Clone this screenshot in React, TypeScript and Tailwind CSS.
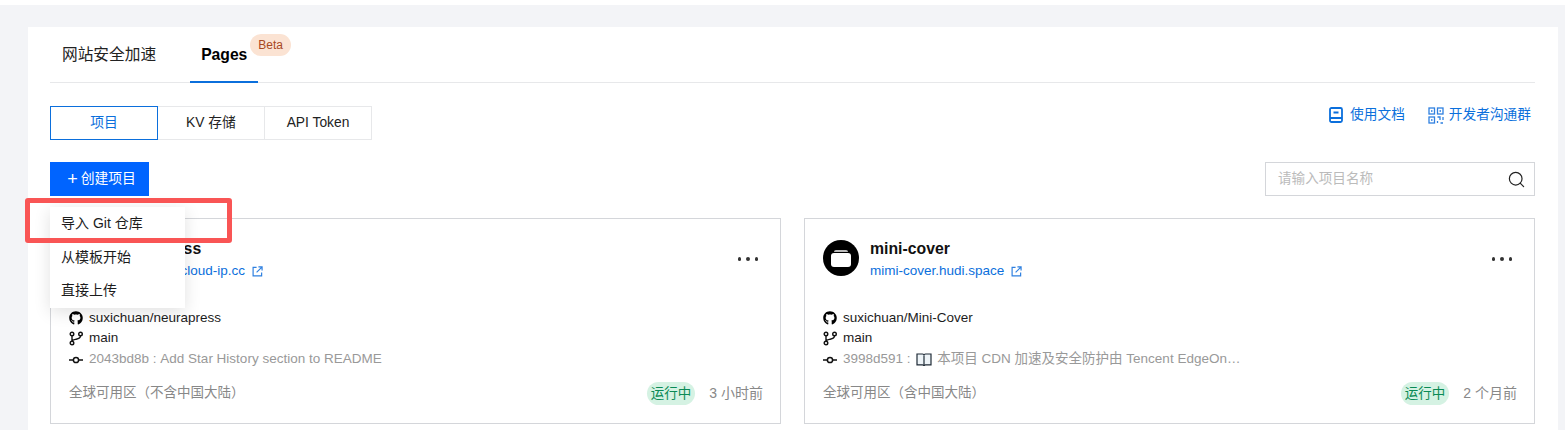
import { Search } from 'lucide-react';
import { FaGithub } from 'react-icons/fa';

const font = 'font-["Liberation_Sans","Noto_Sans_CJK_SC",sans-serif]';

function LinkOut() {
  return (
    <svg width="11" height="11" viewBox="0 0 12 12" fill="none" stroke="#2f80e0" strokeWidth="1.3" className="ml-[7px] mt-[2px] shrink-0">
      <path d="M5 1.5H1.2v9.3h9.3V7" />
      <path d="M5 7l5.5-5.5M7 1h4v4" />
    </svg>
  );
}

function BranchIcon() {
  return (
    <svg width="14" height="15" viewBox="0 0 14 15" fill="none" stroke="#111111" strokeWidth="1.4" className="mr-[6px] shrink-0">
      <circle cx="3" cy="3" r="1.8" />
      <circle cx="3" cy="12" r="1.8" />
      <circle cx="11.5" cy="3" r="1.8" />
      <path d="M3 4.8v5.4M11.5 4.8c0 3-3 3.2-5 3.6-1.6.3-3 .8-3.5 1.8" />
    </svg>
  );
}

function CommitIcon() {
  return (
    <svg width="14" height="14" viewBox="0 0 14 14" fill="none" stroke="#111111" strokeWidth="1.5" className="mr-[6px] shrink-0">
      <circle cx="7" cy="7" r="2.6" />
      <path d="M0 7h4.4M9.6 7H14" />
    </svg>
  );
}

function BookEmoji() {
  return (
    <svg width="16" height="14" viewBox="0 0 16 14" fill="none" stroke="#1f2a36" strokeWidth="1.2" className="ml-[2px] mr-[5px] shrink-0">
      <path d="M1 1h5.5c.8 0 1.5.4 1.5 1.1C8 1.4 8.7 1 9.5 1H15v10.8H9.5c-.8 0-1.5.3-1.5 1.1 0-.8-.7-1.1-1.5-1.1H1z" fill="#eef4f8" />
      <path d="M8 2.2V12.8" />
    </svg>
  );
}

function Logo() {
  return (
    <div className="w-9 h-9 rounded-full bg-black flex flex-col items-center justify-center shrink-0">
      <div className="w-[14px] h-[2px] rounded-t-sm bg-[#bbbbbb]" />
      <div className="w-[20px] h-[14px] mt-[1px] rounded-[3px] bg-white" />
    </div>
  );
}

type Card = {
  name: string;
  url: string;
  repo: string;
  hash: string;
  commit: string;
  book?: boolean;
  region: string;
  time: string;
};

const cards: Card[] = [
  {
    name: 'neurapress',
    url: 'neurapres.cloud-ip.cc',
    repo: 'suxichuan/neurapress',
    hash: '2043bd8b',
    commit: 'Add Star History section to README',
    region: '全球可用区（不含中国大陆）',
    time: '3 小时前',
  },
  {
    name: 'mini-cover',
    url: 'mimi-cover.hudi.space',
    repo: 'suxichuan/Mini-Cover',
    hash: '3998d591',
    commit: '本项目 CDN 加速及安全防护由 Tencent EdgeOn…',
    book: true,
    region: '全球可用区（含中国大陆）',
    time: '2 个月前',
  },
];

function ProjectCard({ card }: { card: Card }) {
  return (
    <div className="h-[206px] border border-[#d4d6da] px-[18px] pt-[21px] flex flex-col">
      <div className="flex items-start h-[36px]">
        <Logo />
        <div className="ml-[11px] flex-1 -mt-[2px]">
          <div className="text-[15.8px] leading-[22px] font-bold text-[#111111]">{card.name}</div>
          <div className="flex items-center text-[13.5px] leading-[21px] text-[#0b6fdc]">
            {card.url}
            <LinkOut />
          </div>
        </div>
        <div className="flex gap-[5px] mr-[4px] mt-[17px]">
          <span className="w-[3.5px] h-[3.5px] rounded-full bg-[#333333]" />
          <span className="w-[3.5px] h-[3.5px] rounded-full bg-[#333333]" />
          <span className="w-[3.5px] h-[3.5px] rounded-full bg-[#333333]" />
        </div>
      </div>
      <div className="mt-[32px] text-[13.5px]">
        <div className="h-[20px] flex items-center text-[#1c1c1c]">
          <FaGithub className="w-[14px] h-[14px] mr-[6px] text-black shrink-0" />
          {card.repo}
        </div>
        <div className="h-[21px] flex items-center text-[#1c1c1c]">
          <BranchIcon />
          main
        </div>
        <div className="h-[21px] flex items-center text-[#999999]">
          <CommitIcon />
          {card.hash}&nbsp;:&nbsp;
          {card.book && <BookEmoji />}
          {card.commit}
        </div>
      </div>
      <div className="mt-[12px] -mr-[1px] flex items-center text-[13.5px] text-[#888888]">
        <span className="flex-1">{card.region}</span>
        <span className="h-[23px] leading-[23px] px-[4px] rounded-full bg-[#d5f2e3] text-[#0a8a55]">运行中</span>
        <span className="ml-[14px] text-[14px] text-[#888888]">{card.time}</span>
      </div>
    </div>
  );
}

export default function App() {
  return (
    <div className={`${font} relative w-[1565px] h-[430px] overflow-hidden bg-[#f3f4f7] border-t-[5px] border-white`}>
      <div className="ml-[28px] mr-[7px] mt-[22px] h-[500px] bg-white pl-[22px] pr-[23px]">
        <div className="flex h-[56px] border-b border-[#e7e8ea] text-[15.7px]">
          <div className="px-3 leading-[55px] text-[#222222]">网站安全加速</div>
          <div className="relative ml-[22px] px-[11px] leading-[55px] font-bold text-black h-[56px] border-b-2 border-[#0b6fdc]">
            Pages
            <span className="absolute left-[60px] top-[7px] w-[41px] h-[22px] rounded-full bg-[#fbe3d3] text-[#a8481f] text-[12px] leading-[22px] font-normal text-center">Beta</span>
          </div>
        </div>

        <div className="flex justify-between mt-[23px]">
          <div className="flex h-[34px] text-[13.8px] leading-[31px] text-[#222222]">
            <div className="w-[108px] text-center border border-[#0b6fdc] text-[#0b6fdc]">项目</div>
            <div className="w-[107px] text-center border-y border-r border-[#e7e8ea]">KV 存储</div>
            <div className="w-[107px] text-center border-y border-r border-[#e7e8ea]">API Token</div>
          </div>
          <div className="flex items-start text-[13.7px] text-[#0b6fdc] mr-[4px]">
            <div className="flex items-center h-[18px]">
              <svg width="14" height="16" viewBox="0 0 14 16" fill="none" stroke="#0b6fdc" strokeWidth="1.8" className="mr-[7px]">
                <rect x="1" y="1" width="12" height="14" rx="1.5" />
                <path d="M1 11h12M4.5 5.5h5" />
              </svg>
              使用文档
            </div>
            <div className="flex items-center h-[18px] ml-[23px]">
              <svg width="16" height="17" viewBox="0 0 16 17" fill="none" stroke="#2f80e0" strokeWidth="1.3" className="mr-[5px]">
                <rect x="1" y="1" width="5.5" height="6" />
                <rect x="9.5" y="1" width="5.5" height="6" />
                <rect x="1" y="10" width="5.5" height="6" />
                <rect x="3" y="3.2" width="1.5" height="1.6" fill="#2f80e0" stroke="none" />
                <rect x="11.5" y="3.2" width="1.5" height="1.6" fill="#2f80e0" stroke="none" />
                <rect x="3" y="12.2" width="1.5" height="1.6" fill="#2f80e0" stroke="none" />
                <path d="M9.5 10h2.5v3M15 10v3M9.5 16v-2M12.5 16H15" />
              </svg>
              开发者沟通群
            </div>
          </div>
        </div>

        <div className="flex justify-between mt-[22px] h-[34px]">
          <button className="w-[99px] bg-[#0064ff] text-white text-[13.8px] flex items-center justify-center pl-[4px]">
            <span className="text-[18px] leading-none mr-[3px]">+</span>创建项目
          </button>
          <div className="w-[270px] border border-[#d4d6da] flex items-center justify-between pl-[12px] pr-[8px]">
            <span className="text-[13.6px] text-[#bbbbbb]">请输入项目名称</span>
            <Search className="w-[19px] h-[19px] text-[#222222]" strokeWidth={1.5} />
          </div>
        </div>

        <div className="grid grid-cols-2 gap-[23px] mt-[22px]">
          {cards.map((c) => (
            <ProjectCard key={c.name} card={c} />
          ))}
        </div>
      </div>

      {/* dropdown + screenshot annotation sit over the content */}
      <div className="absolute left-[50px] top-[202px] w-[135px] h-[101px] bg-white shadow-[0_4px_16px_rgba(0,0,0,0.12)] text-[14px] text-[#1c1c1c]">
        <div className="h-[32px] leading-[32px] pl-[11px]">导入 Git 仓库</div>
        <div className="h-[36px] leading-[36px] pl-[11px]">从模板开始</div>
        <div className="h-[31px] leading-[31px] pl-[11px]">直接上传</div>
      </div>
      <div className="absolute left-[25px] top-[193px] w-[207px] h-[45px] border-[5px] border-[#f95555] rounded-[3px]" />
    </div>
  );
}
